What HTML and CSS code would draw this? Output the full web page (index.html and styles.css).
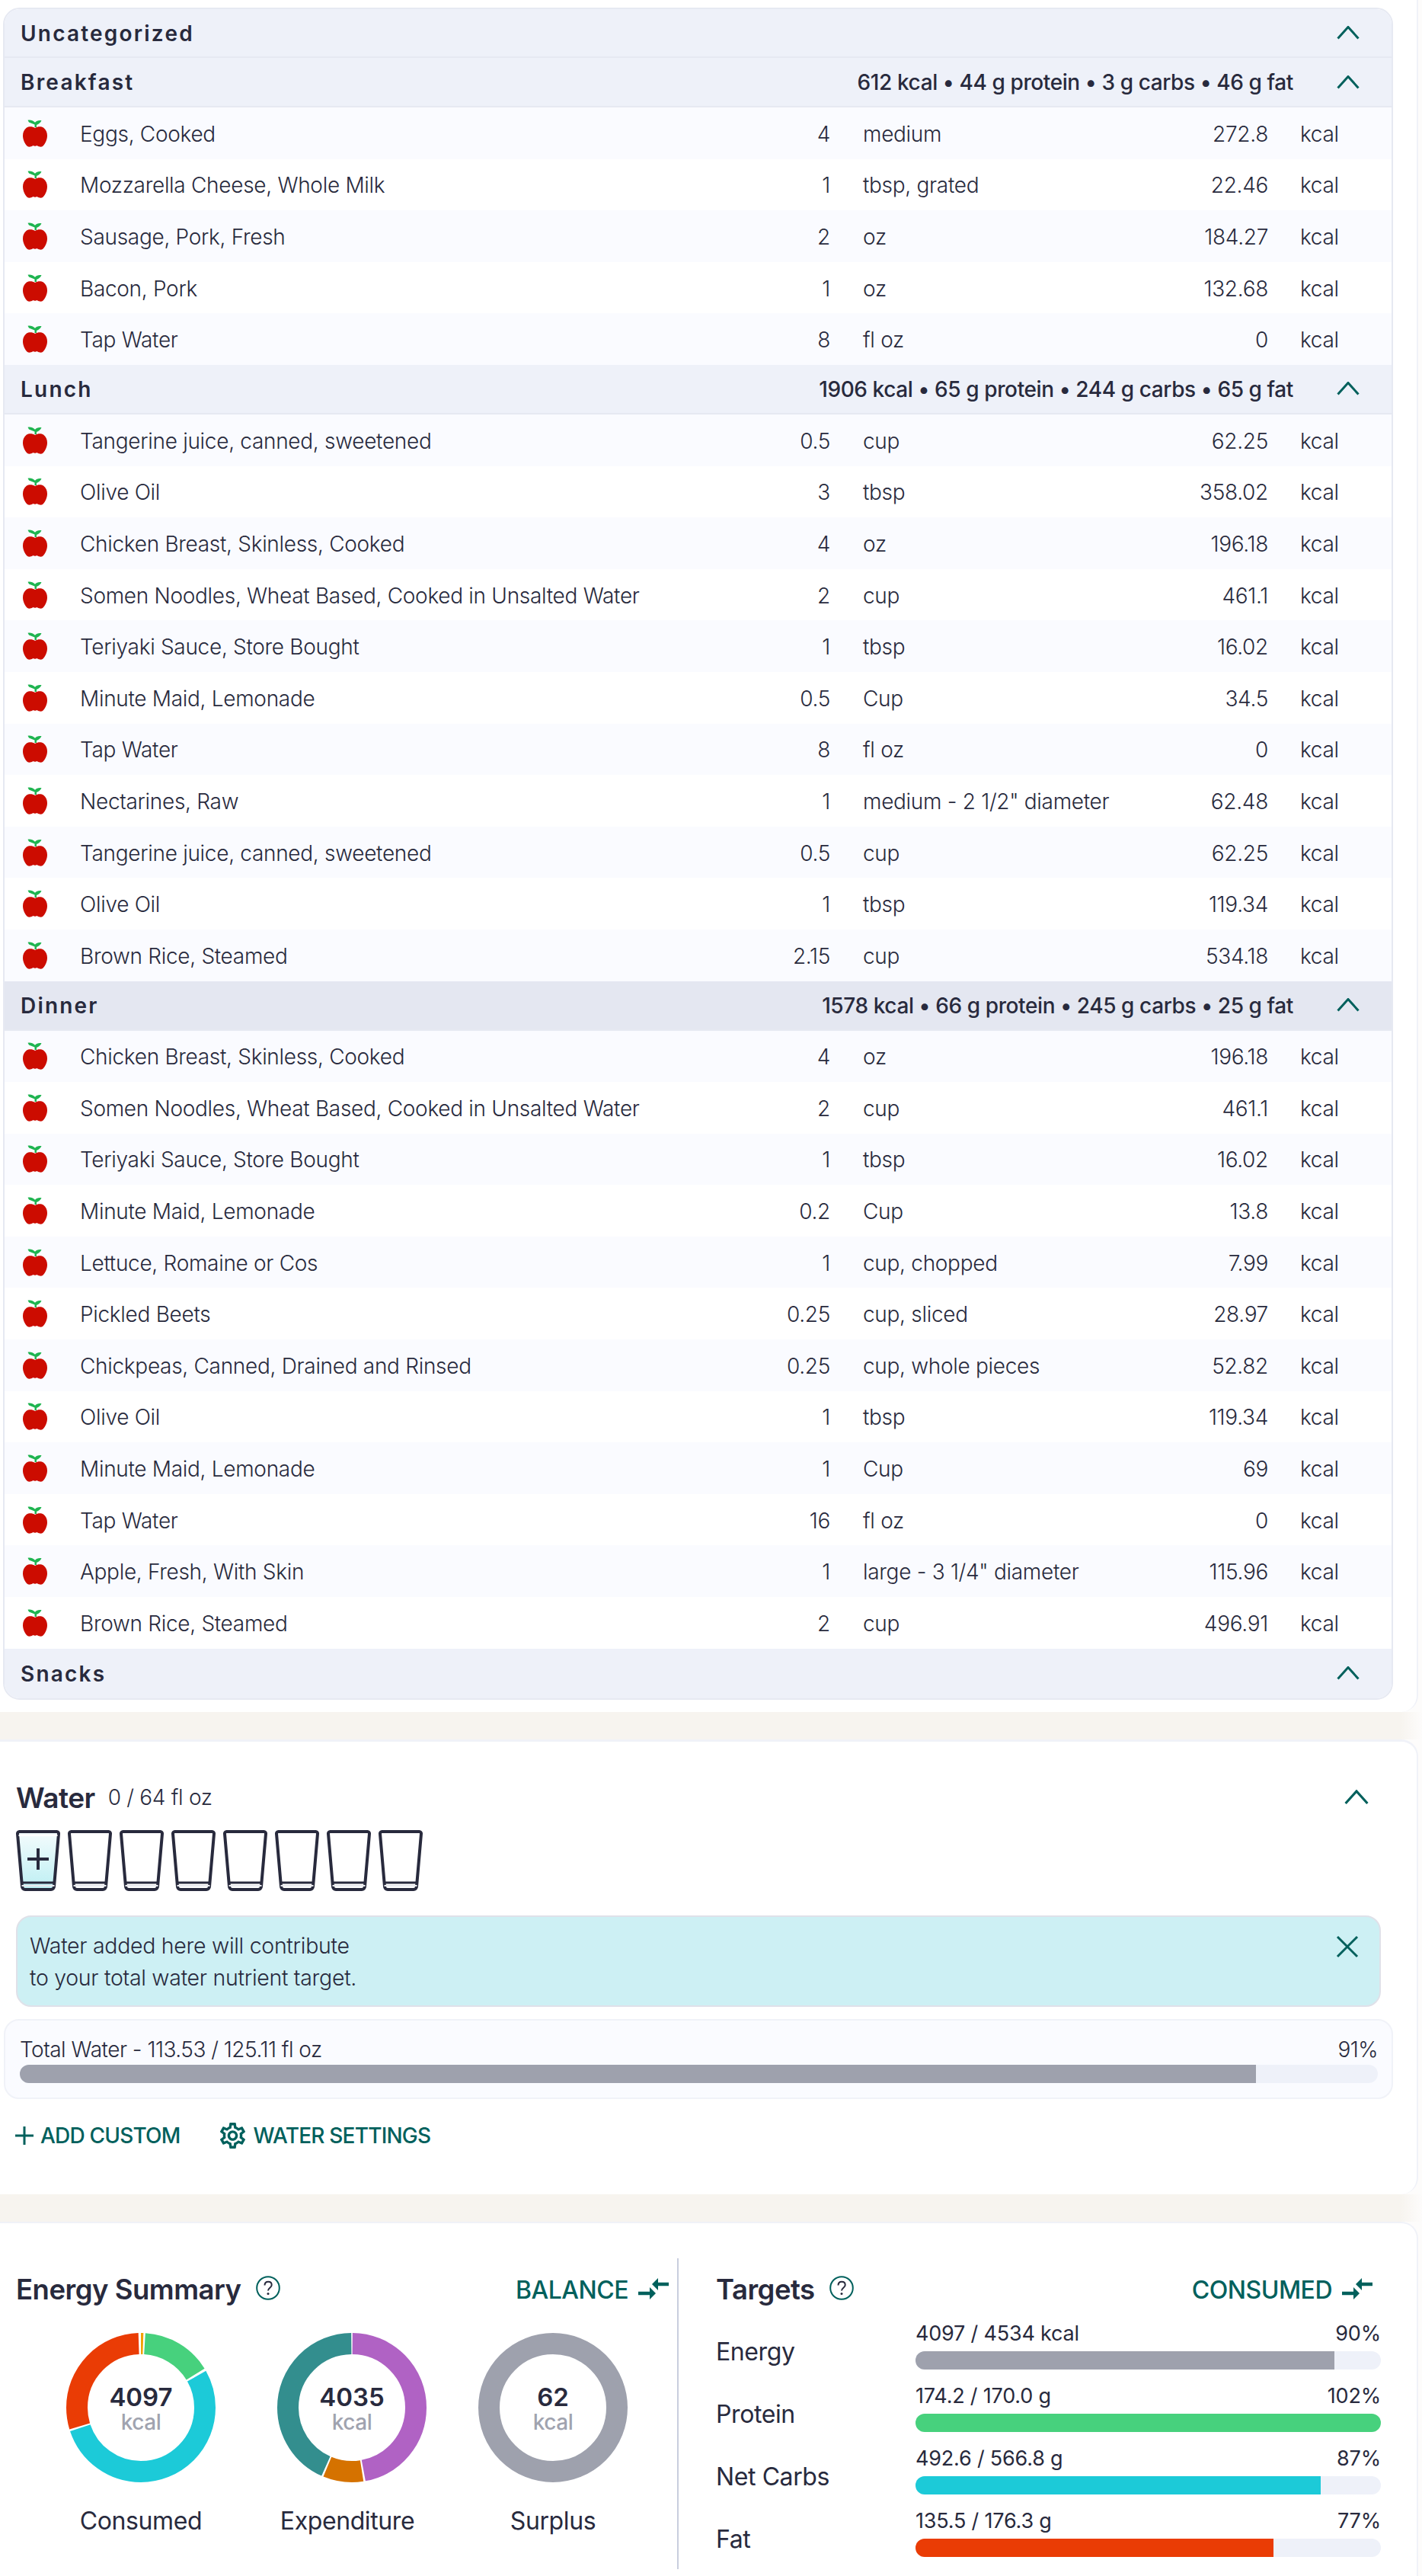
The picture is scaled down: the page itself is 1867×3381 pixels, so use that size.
FILE: index.html
```html
<!DOCTYPE html>
<html lang="en">
<head>
<meta charset="utf-8">
<title>Diary</title>
<link rel="stylesheet" href="styles.css">
</head>
<body>
<svg class="defs" width="0" height="0" aria-hidden="true">
  <defs>
    <linearGradient id="waterfill" x1="0" y1="0" x2="0" y2="1"><stop offset="0" stop-color="#f4fcfd"/><stop offset="1" stop-color="#bdeff3"/></linearGradient>
    <symbol id="apple" viewBox="0 0 32 36">
      <path d="M16 11c-3-2-8-2.500-11-.5C1.500 13 0 17 0 21c0 5 2.500 11 6 14 1.500 1 3 1 5 .3 1-.4 2-1 3.200-1 .6 0 1.200.3 1.800.6.600-.3 1.200-.6 1.800-.6 1.200 0 2.200.6 3.200 1 2 .7 3.500.7 5-.3 3.500-3 6-9 6-14 0-4-1.500-8-5-10.500-3-2-8-1.500-11 .5z" fill="#cc0c00"/>
      <path d="M15.500 10V6.500L8 3.500 6.500 0.800C10 0 13 1 16 3.800 18 1.600 20.500.6 24.500 1.200 23 4 21 6 18 7v3z" fill="#1fb450"/>
    </symbol>
    <symbol id="chev" viewBox="0 0 30 18"><path d="M1.500 16.500 15 1.500l13.500 15" fill="none" stroke="currentColor" stroke-width="3"/></symbol>
    <symbol id="swap" viewBox="0 0 41 30"><path d="M40 8H24" fill="none" stroke="currentColor" stroke-width="4.500"/><path d="M18 8l8-8v16zM23 20l-8-8v16z" fill="currentColor"/><path d="M0 20h17" fill="none" stroke="currentColor" stroke-width="4.500"/></symbol>
    <symbol id="help" viewBox="0 0 32 32"><circle cx="16" cy="16" r="14.800" fill="none" stroke="currentColor" stroke-width="2"/><path d="M11.500 12.500c0-3 2-4.800 4.700-4.800s4.500 1.800 4.500 4.200c0 3.800-4.700 3.800-4.700 7.600" fill="none" stroke="#282a3d" stroke-width="2"/><circle cx="16" cy="23.500" r="1.500" fill="#282a3d"/></symbol>
    <symbol id="glass" viewBox="0 0 58 80">
      <path d="M4.500 2h49a2.500 2.500 0 0 1 2.500 2.800L50 74a4 4 0 0 1-4 4H12a4 4 0 0 1-4-4L2 4.800A2.500 2.500 0 0 1 4.500 2z" fill="#fff" stroke="#282a3d" stroke-width="4"/>
      <path d="M7.500 69h43" stroke="#282a3d" stroke-width="3"/>
      <path d="M7.500 73h43" stroke="#e8e9ee" stroke-width="2"/>
    </symbol>
  </defs>
</svg>

<section class="card card-diary">
  <div class="table">
    <div class="group-head"><span class="group-name">Uncategorized</span><svg class="chev"><use href="#chev"/></svg></div>

    <div class="group">
      <div class="group-head"><span class="group-name">Breakfast</span><span class="group-stats">612 kcal • 44 g protein • 3 g carbs • 46 g fat</span><svg class="chev"><use href="#chev"/></svg></div>
      <div class="row"><svg class="apple"><use href="#apple"/></svg><span>Eggs, Cooked</span><span class="num">4</span><span class="unit">medium</span><span class="num">272.8</span><span class="kc">kcal</span></div>
      <div class="row"><svg class="apple"><use href="#apple"/></svg><span>Mozzarella Cheese, Whole Milk</span><span class="num">1</span><span class="unit">tbsp, grated</span><span class="num">22.46</span><span class="kc">kcal</span></div>
      <div class="row"><svg class="apple"><use href="#apple"/></svg><span>Sausage, Pork, Fresh</span><span class="num">2</span><span class="unit">oz</span><span class="num">184.27</span><span class="kc">kcal</span></div>
      <div class="row"><svg class="apple"><use href="#apple"/></svg><span>Bacon, Pork</span><span class="num">1</span><span class="unit">oz</span><span class="num">132.68</span><span class="kc">kcal</span></div>
      <div class="row"><svg class="apple"><use href="#apple"/></svg><span>Tap Water</span><span class="num">8</span><span class="unit">fl oz</span><span class="num">0</span><span class="kc">kcal</span></div>
    </div>

    <div class="group">
      <div class="group-head"><span class="group-name">Lunch</span><span class="group-stats">1906 kcal • 65 g protein • 244 g carbs • 65 g fat</span><svg class="chev"><use href="#chev"/></svg></div>
      <div class="row"><svg class="apple"><use href="#apple"/></svg><span>Tangerine juice, canned, sweetened</span><span class="num">0.5</span><span class="unit">cup</span><span class="num">62.25</span><span class="kc">kcal</span></div>
      <div class="row"><svg class="apple"><use href="#apple"/></svg><span>Olive Oil</span><span class="num">3</span><span class="unit">tbsp</span><span class="num">358.02</span><span class="kc">kcal</span></div>
      <div class="row"><svg class="apple"><use href="#apple"/></svg><span>Chicken Breast, Skinless, Cooked</span><span class="num">4</span><span class="unit">oz</span><span class="num">196.18</span><span class="kc">kcal</span></div>
      <div class="row"><svg class="apple"><use href="#apple"/></svg><span>Somen Noodles, Wheat Based, Cooked in Unsalted Water</span><span class="num">2</span><span class="unit">cup</span><span class="num">461.1</span><span class="kc">kcal</span></div>
      <div class="row"><svg class="apple"><use href="#apple"/></svg><span>Teriyaki Sauce, Store Bought</span><span class="num">1</span><span class="unit">tbsp</span><span class="num">16.02</span><span class="kc">kcal</span></div>
      <div class="row"><svg class="apple"><use href="#apple"/></svg><span>Minute Maid, Lemonade</span><span class="num">0.5</span><span class="unit">Cup</span><span class="num">34.5</span><span class="kc">kcal</span></div>
      <div class="row"><svg class="apple"><use href="#apple"/></svg><span>Tap Water</span><span class="num">8</span><span class="unit">fl oz</span><span class="num">0</span><span class="kc">kcal</span></div>
      <div class="row"><svg class="apple"><use href="#apple"/></svg><span>Nectarines, Raw</span><span class="num">1</span><span class="unit">medium - 2 1/2" diameter</span><span class="num">62.48</span><span class="kc">kcal</span></div>
      <div class="row"><svg class="apple"><use href="#apple"/></svg><span>Tangerine juice, canned, sweetened</span><span class="num">0.5</span><span class="unit">cup</span><span class="num">62.25</span><span class="kc">kcal</span></div>
      <div class="row"><svg class="apple"><use href="#apple"/></svg><span>Olive Oil</span><span class="num">1</span><span class="unit">tbsp</span><span class="num">119.34</span><span class="kc">kcal</span></div>
      <div class="row"><svg class="apple"><use href="#apple"/></svg><span>Brown Rice, Steamed</span><span class="num">2.15</span><span class="unit">cup</span><span class="num">534.18</span><span class="kc">kcal</span></div>
    </div>

    <div class="group">
      <div class="group-head group-head-active"><span class="group-name">Dinner</span><span class="group-stats">1578 kcal • 66 g protein • 245 g carbs • 25 g fat</span><svg class="chev"><use href="#chev"/></svg></div>
      <div class="row"><svg class="apple"><use href="#apple"/></svg><span>Chicken Breast, Skinless, Cooked</span><span class="num">4</span><span class="unit">oz</span><span class="num">196.18</span><span class="kc">kcal</span></div>
      <div class="row"><svg class="apple"><use href="#apple"/></svg><span>Somen Noodles, Wheat Based, Cooked in Unsalted Water</span><span class="num">2</span><span class="unit">cup</span><span class="num">461.1</span><span class="kc">kcal</span></div>
      <div class="row"><svg class="apple"><use href="#apple"/></svg><span>Teriyaki Sauce, Store Bought</span><span class="num">1</span><span class="unit">tbsp</span><span class="num">16.02</span><span class="kc">kcal</span></div>
      <div class="row"><svg class="apple"><use href="#apple"/></svg><span>Minute Maid, Lemonade</span><span class="num">0.2</span><span class="unit">Cup</span><span class="num">13.8</span><span class="kc">kcal</span></div>
      <div class="row"><svg class="apple"><use href="#apple"/></svg><span>Lettuce, Romaine or Cos</span><span class="num">1</span><span class="unit">cup, chopped</span><span class="num">7.99</span><span class="kc">kcal</span></div>
      <div class="row"><svg class="apple"><use href="#apple"/></svg><span>Pickled Beets</span><span class="num">0.25</span><span class="unit">cup, sliced</span><span class="num">28.97</span><span class="kc">kcal</span></div>
      <div class="row"><svg class="apple"><use href="#apple"/></svg><span>Chickpeas, Canned, Drained and Rinsed</span><span class="num">0.25</span><span class="unit">cup, whole pieces</span><span class="num">52.82</span><span class="kc">kcal</span></div>
      <div class="row"><svg class="apple"><use href="#apple"/></svg><span>Olive Oil</span><span class="num">1</span><span class="unit">tbsp</span><span class="num">119.34</span><span class="kc">kcal</span></div>
      <div class="row"><svg class="apple"><use href="#apple"/></svg><span>Minute Maid, Lemonade</span><span class="num">1</span><span class="unit">Cup</span><span class="num">69</span><span class="kc">kcal</span></div>
      <div class="row"><svg class="apple"><use href="#apple"/></svg><span>Tap Water</span><span class="num">16</span><span class="unit">fl oz</span><span class="num">0</span><span class="kc">kcal</span></div>
      <div class="row"><svg class="apple"><use href="#apple"/></svg><span>Apple, Fresh, With Skin</span><span class="num">1</span><span class="unit">large - 3 1/4" diameter</span><span class="num">115.96</span><span class="kc">kcal</span></div>
      <div class="row"><svg class="apple"><use href="#apple"/></svg><span>Brown Rice, Steamed</span><span class="num">2</span><span class="unit">cup</span><span class="num">496.91</span><span class="kc">kcal</span></div>
    </div>

    <div class="group-head group-head-last"><span class="group-name">Snacks</span><svg class="chev"><use href="#chev"/></svg></div>
  </div>
</section>

<div class="gap"></div>

<section class="card card-water">
  <div class="water-head">
    <h2 class="water-title">Water</h2><span class="water-amount">0 / 64 fl oz</span>
    <svg class="chev chev-water"><use href="#chev"/></svg>
  </div>
  <div class="glasses">
    <div class="glass-add">
      <svg class="glass" viewBox="0 0 58 80">
        <path d="M4.500 2h49a2.500 2.500 0 0 1 2.500 2.800L50 74a4 4 0 0 1-4 4H12a4 4 0 0 1-4-4L2 4.800A2.500 2.500 0 0 1 4.500 2z" fill="url(#waterfill)" stroke="#282a3d" stroke-width="4"/>
        <path d="M3.500 7h51" stroke="#fff" stroke-width="2"/>
        <path d="M7.500 69h43" stroke="#282a3d" stroke-width="3"/>
        <path d="M7.500 73h43" stroke="#e8e9ee" stroke-width="2"/>
        <path d="M29 24v28M15 38h28" stroke="#282a3d" stroke-width="4" fill="none"/>
      </svg>
    </div>
    <svg class="glass"><use href="#glass"/></svg>
    <svg class="glass"><use href="#glass"/></svg>
    <svg class="glass"><use href="#glass"/></svg>
    <svg class="glass"><use href="#glass"/></svg>
    <svg class="glass"><use href="#glass"/></svg>
    <svg class="glass"><use href="#glass"/></svg>
    <svg class="glass"><use href="#glass"/></svg>
  </div>
  <div class="alert">
    <p class="alert-text">Water added here will contribute<br>to your total water nutrient target.</p>
    <svg class="alert-close" viewBox="0 0 30 30"><path d="M2 2l26 26M28 2 2 28" fill="none" stroke="currentColor" stroke-width="3"/></svg>
  </div>
  <div class="total">
    <div class="total-line"><span>Total Water - 113.53 / 125.11 fl oz</span><span>91%</span></div>
    <div class="bar bar-total"><div class="fill fill-gray" style="width:91%"></div></div>
  </div>
  <div class="actions">
    <button class="action"><svg class="plus" viewBox="0 0 24 24"><path d="M12 0v24M0 12h24" fill="none" stroke="currentColor" stroke-width="3"/></svg>ADD CUSTOM</button>
    <button class="action action-settings"><svg class="gear" viewBox="2.400 2 19.200 20"><path fill="currentColor" d="M19.430 12.980c.04-.32.07-.64.07-.98 0-.34-.03-.66-.07-.98l2.110-1.650c.19-.15.24-.42.12-.64l-2-3.460c-.09-.16-.26-.25-.44-.25-.06 0-.12.01-.17.03l-2.490 1c-.52-.4-1.080-.73-1.690-.98l-.38-2.650C14.460 2.180 14.250 2 14 2h-4c-.25 0-.46.18-.49.42l-.38 2.650c-.61.25-1.170.59-1.690.98l-2.490-1c-.06-.02-.12-.03-.18-.03-.17 0-.34.09-.43.25l-2 3.460c-.13.22-.07.49.12.64l2.110 1.650c-.04.32-.07.65-.07.98 0 .33.03.66.07.98l-2.110 1.650c-.19.15-.24.42-.12.64l2 3.460c.09.16.26.25.44.25.06 0 .12-.01.17-.03l2.490-1c.52.4 1.080.73 1.690.98l.38 2.650c.03.24.24.42.49.42h4c.25 0 .46-.18.49-.42l.38-2.650c.61-.25 1.170-.59 1.690-.98l2.490 1c.06.02.12.03.18.03.17 0 .34-.09.43-.25l2-3.460c.12-.22.07-.49-.12-.64l-2.110-1.650zm-1.980-1.710c.04.31.05.52.05.73 0 .21-.02.43-.05.73l-.14 1.130.89.7 1.080.84-.7 1.210-1.270-.51-1.040-.42-.9.68c-.43.32-.84.56-1.250.73l-1.060.43-.16 1.130-.2 1.350h-1.400l-.19-1.350-.16-1.130-1.060-.43c-.43-.18-.83-.41-1.230-.71l-.91-.7-1.060.43-1.270.51-.7-1.210 1.080-.84.89-.7-.14-1.130c-.03-.31-.05-.54-.05-.74s.02-.43.05-.73l.14-1.130-.89-.7-1.080-.84.7-1.210 1.270.51 1.040.42.9-.68c.43-.32.84-.56 1.250-.73l1.060-.43.16-1.130.2-1.350h1.390l.19 1.350.16 1.130 1.060.43c.43.18.83.41 1.230.71l.91.7 1.060-.43 1.270-.51.7 1.210-1.070.85-.89.7.14 1.130zM12 8c-2.210 0-4 1.790-4 4s1.790 4 4 4 4-1.790 4-4-1.790-4-4-4zm0 6c-1.100 0-2-.9-2-2s.9-2 2-2 2 .9 2 2-.9 2-2 2z"/></svg>WATER SETTINGS</button>
  </div>
</section>

<div class="gap"></div>

<section class="card card-energy">
  <div class="energy">
    <div class="panel-head">
      <h2 class="panel-title">Energy Summary</h2>
      <svg class="help"><use href="#help"/></svg>
      <span class="toggle">BALANCE<svg class="swap"><use href="#swap"/></svg></span>
    </div>
    <div class="donuts">
      <figure class="donut-item">
        <div class="donut">
          <svg class="donut-svg" viewBox="0 0 196 196">
            <circle class="ring" cx="98" cy="98" r="84" pathLength="360" stroke="#f2a100" stroke-dasharray="2.500 360" stroke-dashoffset="0.500"/>
            <circle class="ring" cx="98" cy="98" r="84" pathLength="360" stroke="#47d17d" stroke-dasharray="55 360" stroke-dashoffset="-3.500"/>
            <circle class="ring" cx="98" cy="98" r="84" pathLength="360" stroke="#1ccad8" stroke-dasharray="191 360" stroke-dashoffset="-60.500"/>
            <circle class="ring" cx="98" cy="98" r="84" pathLength="360" stroke="#ea3c05" stroke-dasharray="105 360" stroke-dashoffset="-253"/>
          </svg>
          <div class="donut-center"><span class="donut-num">4097</span><span class="donut-unit">kcal</span></div>
        </div>
        <figcaption class="donut-label">Consumed</figcaption>
      </figure>
      <figure class="donut-item">
        <div class="donut">
          <svg class="donut-svg" viewBox="0 0 196 196">
            <circle class="ring" cx="98" cy="98" r="84" pathLength="360" stroke="#b062c4" stroke-dasharray="169 360" stroke-dashoffset="-0.500"/>
            <circle class="ring" cx="98" cy="98" r="84" pathLength="360" stroke="#d57200" stroke-dasharray="31.500 360" stroke-dashoffset="-171"/>
            <circle class="ring" cx="98" cy="98" r="84" pathLength="360" stroke="#338e8e" stroke-dasharray="155.500 360" stroke-dashoffset="-204"/>
          </svg>
          <div class="donut-center"><span class="donut-num">4035</span><span class="donut-unit">kcal</span></div>
        </div>
        <figcaption class="donut-label donut-label-shift">Expenditure</figcaption>
      </figure>
      <figure class="donut-item">
        <div class="donut">
          <svg class="donut-svg" viewBox="0 0 196 196">
            <circle class="ring" cx="98" cy="98" r="84" pathLength="360" stroke="#9ea1ad"/>
          </svg>
          <div class="donut-center"><span class="donut-num">62</span><span class="donut-unit">kcal</span></div>
        </div>
        <figcaption class="donut-label">Surplus</figcaption>
      </figure>
    </div>
  </div>
  <div class="targets">
    <div class="panel-head">
      <h2 class="panel-title">Targets</h2>
      <svg class="help"><use href="#help"/></svg>
      <span class="toggle">CONSUMED<svg class="swap"><use href="#swap"/></svg></span>
    </div>
    <div class="target-list">
      <div class="target">
        <span class="target-name">Energy</span>
        <div class="target-main">
          <div class="target-line"><span>4097 / 4534 kcal</span><span>90%</span></div>
          <div class="bar"><div class="fill fill-gray" style="width:90%"></div></div>
        </div>
      </div>
      <div class="target">
        <span class="target-name">Protein</span>
        <div class="target-main">
          <div class="target-line"><span>174.2 / 170.0 g</span><span>102%</span></div>
          <div class="bar"><div class="fill fill-green" style="width:100%"></div></div>
        </div>
      </div>
      <div class="target">
        <span class="target-name">Net Carbs</span>
        <div class="target-main">
          <div class="target-line"><span>492.6 / 566.8 g</span><span>87%</span></div>
          <div class="bar"><div class="fill fill-cyan" style="width:87%"></div></div>
        </div>
      </div>
      <div class="target">
        <span class="target-name">Fat</span>
        <div class="target-main">
          <div class="target-line"><span>135.5 / 176.3 g</span><span>77%</span></div>
          <div class="bar"><div class="fill fill-red" style="width:77%"></div></div>
        </div>
      </div>
    </div>
  </div>
</section>
</body>
</html>
```

FILE: styles.css
```css
* { box-sizing: border-box; }

html, body { margin: 0; padding: 0; }

body {
  width: 1867px;
  background: #fdfcfb;
  color: #282a3d;
  font-family: Inter, "Noto Sans", sans-serif;
  font-size: 28px;
  font-weight: 350;
  letter-spacing: -0.3px;
}

.defs { position: absolute; }

.gap {
  height: 36px;
  background: linear-gradient(to right, #f7f4ef 98.5%, #fdfcfb);
}

.card {
  width: 1862px;
  background: #fff;
  border-right: 2px solid #f0f2f8;
}

.card-diary {
  height: 2247px;
  padding: 10px 31px 0 4px;
  border-radius: 0 0 22px 0;
}

.card-water {
  height: 597px;
  padding: 53px 47px 0 21px;
  border-top: 3px solid #f0f2f8;
  border-radius: 0 22px 22px 0;
}

.card-energy {
  height: 465px;
  padding: 46px 47px 0 21px;
  border-top: 2px solid #f0f2f8;
  border-radius: 0 22px 0 0;
  display: grid;
  grid-template-columns: 870px 1fr;
}

/* diary table */
.table {
  border: 2px solid #e6e9f2;
  border-radius: 22px;
  overflow: hidden;
  background: #fff;
}

.group-head {
  height: 65px;
  padding: 0 42px 0 21px;
  display: flex;
  align-items: center;
  background: #eef1f9;
  border-bottom: 2px solid #e6e9f2;
}

.table > .group-head:first-child { height: 64px; }
.group-head-active { background: #e4e7f1; }
.group-head-last { border-bottom: 0; }

.group-name {
  font-weight: 600;
  letter-spacing: 2.2px;
  padding-top: 1px;
}

.group-stats {
  margin-left: auto;
  font-weight: 500;
  letter-spacing: -0.4px;
  padding-top: 1px;
}

.group-stats + .chev { margin-left: 57px; }

.chev {
  width: 30px;
  height: 18px;
  margin-left: auto;
  color: #00605c;
  flex: none;
}

.row {
  height: 67.6px;
  padding-left: 24px;
  display: grid;
  grid-template-columns: 75px 865px 120px 43px 340px 192px 42px 1fr;
  align-items: center;
  background: #fff;
  white-space: nowrap;
}

.row:nth-child(even) { background: #fafbff; }

.row > span { padding-top: 2px; }
.row > span:nth-of-type(1) { grid-column: 2; }
.row > span:nth-of-type(2) { grid-column: 3; text-align: right; }
.row > span:nth-of-type(3) { grid-column: 5; }
.row > span:nth-of-type(4) { grid-column: 6; text-align: right; }
.row > span:nth-of-type(5) { grid-column: 8; }

.apple { width: 32px; height: 36px; }

/* water */
.water-head {
  height: 40px;
  display: flex;
  align-items: center;
  padding-right: 16px;
}

.water-title {
  margin: 0;
  font-size: 37px;
  font-weight: 600;
  letter-spacing: -0.5px;
}

.water-amount { margin-left: 17px; }

.chev-water { width: 32px; height: 20px; }

.glasses {
  margin-top: 23px;
  display: flex;
  gap: 10px;
}

.glass-add { display: flex; }

.glass { width: 58px; height: 80px; display: block; }

.alert {
  height: 120px;
  margin-top: 32px;
  padding: 17px 27px 0 16px;
  display: flex;
  justify-content: space-between;
  background: #cdf0f4;
  border: 2px solid #dfe1e9;
  border-radius: 20px;
}

.alert-text {
  margin: 0;
  font-size: 28.500px;
  line-height: 42px;
}

.alert-close {
  width: 30px;
  height: 30px;
  margin-top: 7px;
  color: #00605c;
}

.total {
  height: 105px;
  margin: 16px -16px 0;
  padding: 21px 18px 0 19px;
  background: #fafbff;
  border: 2px solid #f0f2f8;
  border-radius: 20px;
  letter-spacing: -0.5px;
}

.total-line, .target-line {
  display: flex;
  justify-content: space-between;
  line-height: 34px;
}

.bar {
  height: 24px;
  margin-top: 6px;
  border-radius: 12px;
  overflow: hidden;
  background: #eef1f9;
}

.bar-total { margin-top: 3px; }

.fill { height: 100%; }
.fill-gray { background: #9ea1ad; }
.fill-green { background: #47d17d; }
.fill-cyan { background: #1ccad8; }
.fill-red { background: #ea3c05; }

.actions {
  margin-top: 28px;
  margin-left: -1px;
  display: flex;
  align-items: center;
  gap: 52px;
}

.action {
  padding: 0;
  border: 0;
  background: none;
  display: flex;
  align-items: center;
  gap: 9px;
  color: #00605c;
  font: inherit;
  font-weight: 500;
  letter-spacing: -0.8px;
  line-height: 40px;
}

.action-settings { gap: 11px; }

.plus { width: 24px; height: 24px; }
.gear { width: 33px; height: 34px; }

/* energy + targets */
.energy {
  padding-top: 19px;
  border-right: 2px solid #c9cede;
  height: 408px;
}

.targets {
  padding: 19px 0 0 49px;
}

.panel-head {
  height: 44px;
  display: flex;
  align-items: center;
}

.panel-title {
  margin: 0;
  font-size: 36.500px;
  font-weight: 600;
  letter-spacing: -0.5px;
}

.help {
  width: 32px;
  height: 32px;
  margin-left: 19px;
  margin-top: -4px;
  color: #00605c;
}

.toggle {
  margin-left: auto;
  margin-right: 10px;
  display: flex;
  align-items: center;
  gap: 13px;
  color: #00605c;
  font-size: 32px;
  font-weight: 500;
  letter-spacing: -0.5px;
}

.swap { width: 41px; height: 30px; }

.donuts {
  margin-top: 35px;
  margin-left: 25.500px;
  display: grid;
  grid-template-columns: 277px 277px 251px;
}

.donut-item {
  margin: 0;
  display: flex;
  flex-direction: column;
  align-items: center;
}

.donut {
  position: relative;
  width: 196px;
  height: 196px;
}

.donut-svg {
  width: 196px;
  height: 196px;
  display: block;
  transform: rotate(-90deg);
}

.ring {
  fill: none;
  stroke-width: 28;
}

.donut-center {
  position: absolute;
  inset: 0;
  display: flex;
  flex-direction: column;
  align-items: center;
  justify-content: center;
}

.donut-num {
  font-size: 33px;
  font-weight: 600;
  line-height: 36px;
  letter-spacing: 0;
  margin-top: 2px;
}

.donut-unit {
  color: #a0a3af;
  font-size: 28px;
  font-weight: 500;
  line-height: 30px;
  letter-spacing: -0.5px;
}

.donut-label {
  margin-top: 31px;
  font-size: 32px;
  font-weight: 400;
  line-height: 40px;
  letter-spacing: -0.4px;
}

.donut-label-shift { margin-right: 12px; }

.target-list {
  margin-top: 19px;
  display: flex;
  flex-direction: column;
  gap: 18px;
}

.target {
  height: 64px;
  display: grid;
  grid-template-columns: 262px 1fr;
}

.target-name {
  align-self: end;
  font-size: 32px;
  font-weight: 400;
  line-height: 46px;
  letter-spacing: -0.4px;
}

.target-main { font-size: 27px; font-weight: 400; letter-spacing: -0.2px; }
```
